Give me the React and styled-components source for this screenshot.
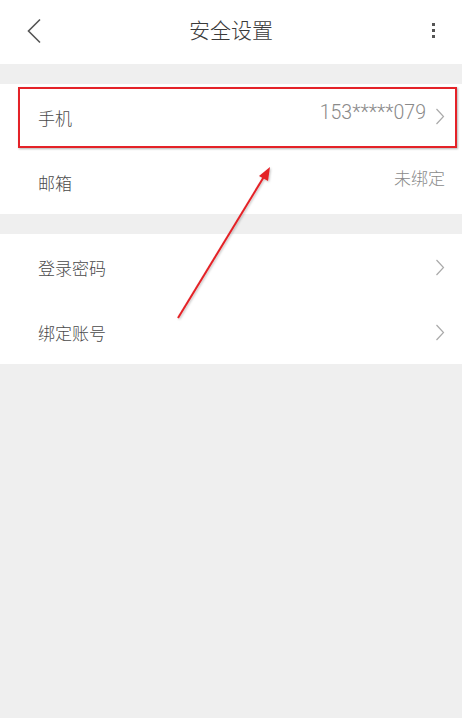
import React from "react";
import styled, { createGlobalStyle } from "styled-components";

const Global = createGlobalStyle`
  html, body {
    margin: 0;
    padding: 0;
    background: #efefef;
  }
  body {
    font-family: "Noto Sans CJK SC", "Noto Sans", sans-serif;
    font-weight: 300;
  }
`;

const Page = styled.div`
  position: relative;
  width: 462px;
  min-height: 718px;
  background: #efefef;
`;

const Header = styled.div`
  height: 64px;
  background: #fff;
  display: grid;
  grid-template-columns: 60px 1fr 60px;
  align-items: center;
`;

const BackBtn = styled.div`
  display: flex;
  align-items: center;
  padding-left: 26px;
  padding-bottom: 3px;
`;

const Title = styled.div`
  text-align: center;
  font-size: 21px;
  color: #3a3a3a;
  padding-bottom: 6px;
`;

const MoreBtn = styled.div`
  display: flex;
  flex-direction: column;
  align-items: flex-end;
  gap: 3px;
  padding-right: 27px;
  padding-bottom: 4px;
`;

const Dot = styled.span`
  width: 3px;
  height: 3px;
  background: #555;
`;

const Group = styled.div`
  background: #fff;
  margin-top: 20px;
`;

const Row = styled.div`
  position: relative;
  height: 65px;
  display: flex;
  align-items: center;
  justify-content: space-between;
  padding: 0 17px 0 38px;
`;

const Label = styled.span`
  font-size: 17px;
  color: #4a4a4a;
  padding-top: 2px;
`;

const Right = styled.div`
  display: flex;
  align-items: center;
  gap: 9px;
`;

const Value = styled.span`
  font-family: ${(p) => (p.$digits ? "Roboto, sans-serif" : "inherit")};
  font-size: ${(p) => (p.$digits ? "19.5px" : "17px")};
  color: #8a8a8a;
  margin-bottom: 8px;
`;

const Mark = styled.div`
  position: absolute;
  top: 3px;
  left: 18px;
  right: 5px;
  bottom: 1px;
  border: 2px solid #e42228;
  box-shadow: 1px 1px 2px rgba(0, 0, 0, 0.3);
  pointer-events: none;
`;

const Overlay = styled.svg`
  position: absolute;
  top: 0;
  left: 0;
  pointer-events: none;
`;

const Chevron = ({ top }) => (
  <svg width="10" height="17" viewBox="0 0 10 17" style={{ marginTop: top }}>
    <path d="M1.5 1 L8.5 8.5 L1.5 16" fill="none" stroke="#aaa" strokeWidth="1.2" />
  </svg>
);

const items = [
  [
    { label: "手机", value: "153*****079", digits: true, arrow: true, marked: true },
    { label: "邮箱", value: "未绑定" },
  ],
  [
    { label: "登录密码", arrow: true },
    { label: "绑定账号", arrow: true },
  ],
];

const App = () => {
  return (
    <Page>
      <Global />
      <Header>
        <BackBtn>
          <svg width="16" height="26" viewBox="0 0 16 26">
            <path d="M14 1.5 L2.5 13 L14 24.5" fill="none" stroke="#555" strokeWidth="1.6" />
          </svg>
        </BackBtn>
        <Title>安全设置</Title>
        <MoreBtn>
          <Dot />
          <Dot />
          <Dot />
        </MoreBtn>
      </Header>
      {items.map((group, i) => (
        <Group key={i}>
          {group.map((e) => (
            <Row key={e.label}>
              <Label>{e.label}</Label>
              <Right>
                {e.value && <Value $digits={e.digits}>{e.value}</Value>}
                {e.arrow && <Chevron top={e.value ? 0 : 2} />}
              </Right>
              {e.marked && <Mark />}
            </Row>
          ))}
        </Group>
      ))}
      <Overlay width="462" height="718" viewBox="0 0 462 718">
        <defs>
          <filter id="sh" x="-20%" y="-20%" width="140%" height="140%">
            <feDropShadow dx="1" dy="1" stdDeviation="0.8" floodColor="#000" floodOpacity="0.25" />
          </filter>
        </defs>
        <g filter="url(#sh)">
          <line x1="178" y1="318" x2="265" y2="175" stroke="#e42228" strokeWidth="2" />
          <polygon points="270,167 268,181 259,176" fill="#e42228" />
        </g>
      </Overlay>
    </Page>
  );
};

export default App;
